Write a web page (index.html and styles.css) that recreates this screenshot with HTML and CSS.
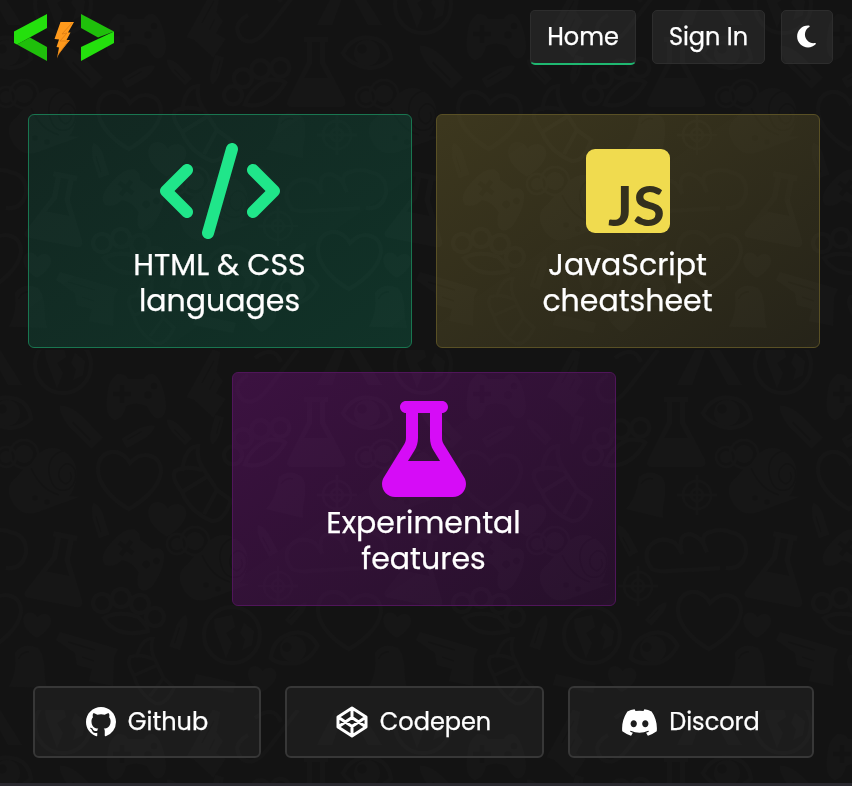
FILE: index.html
```html
<!DOCTYPE html>
<html lang="en">
<head>
<meta charset="utf-8">
<title>Code cheatsheets</title>
<link rel="stylesheet" href="styles.css">
</head>
<body>
<svg class="backdrop" aria-hidden="true">
  <defs>
    <g id="heart"><path d="M0 29C-13 22-32 6-31-12C-30-31-8-34 1-17C13-31 32-25 32-9C31 8 12 22 0 29Z"/></g>
    <g id="bullet"><path d="M-6 19V-5Q-4-17 0-20Q5-16 6-5V19Z"/><path class="cut" d="M-2 14V-5"/></g>
    <g id="flask"><path d="M-12-35H12V-30H9V-10L29 28Q31 35 24 35H-24Q-31 35-28 28L-9-10V-30H-12Z"/><path class="hole" d="M-4-30H4V-9L12 6H-12L-4-9Z"/></g>
    <g id="pad"><path d="M-18-22Q-10-22-8-17H8Q13-25 20-20Q29-10 30 12Q28 24 20 22Q14 18 11 10Q0 5-10 10Q-12 22-21 24Q-31 21-29 2Q-28-17-18-22Z"/><path class="cut wide" d="M-14-11V7M-23-2H-5"/><circle class="hole" cx="12" cy="-1" r="4"/><circle class="hole" cx="18" cy="-10" r="3.5"/></g>
    <g id="globe"><circle class="line" r="28"/><path d="M-18-16L0-20L3-8L-6-2L0 8L-6 23L-12 7L-17-6ZM12-12L22-4L20 10L10 15L13 4L8-2Z"/></g>
    <g id="eye"><path class="line" d="M-24 0Q-14-18 5-15Q22-12 24 6Q8 20-9 12Q-21 7-24 0Z"/><circle r="13"/><circle class="hole" cx="-5" cy="-4" r="5"/></g>
    <g id="snail"><path d="M-27 0Q-20-10-12-14Q2-38 22-26Q36-16 33 2Q30 15 26 18L36 19L0 32Q-23 43-33 19Q-37 6-27 0Z"/><circle class="line thin" cx="-19" cy="-24" r="14"/><circle cx="-19" cy="-24" r="9"/><circle class="line thin" cx="-37" cy="-21" r="10"/><circle cx="-37" cy="-21" r="6"/><path class="cut" d="M-12-10Q-2 12 16 17M23-28Q4-24 6-5Q10 17 26 11Q35 4 32-8Q25-20 17-9Q13 2 23 6Q31 2 27-6"/><circle class="hole" cx="-8" cy="20" r="3"/><circle class="hole" cx="4" cy="24" r="3"/></g>
    <g id="target"><circle class="line thin" r="14"/><circle class="line thin" r="6"/><path class="line thin" d="M-20 0H20M0-20V20"/></g>
    <g id="bell"><path d="M-11-20Q0-29 12-20Q17-14 14 4Q12 14 13 21L-24 12Q-13 0-11-20Z"/><path class="cut" d="M-9-13Q-4-20 3-18"/></g>
    <g id="knuckle"><circle class="line" cx="-25" cy="-9" r="9"/><circle class="line" cx="-6" cy="-14" r="9"/><circle class="line" cx="13" cy="-8" r="9"/><circle class="line" cx="28" cy="5" r="9"/><path class="line" d="M-23 6Q-7-2 11 5Q21 14 21 19Q-10 27-23 6Z"/></g>
    <g id="gun"><path d="M-34-10L-30-18L28-1L24 7L23 36L-1 31L2 19L-13 15L-15 3Z"/><path class="cut" d="M-22-8L5 0M-8 7L4 11"/></g>
    <g id="croissant"><path class="line" d="M-18-12Q-15-36-2-37Q-4-24 4-13L17 7L31 17Q24 39 12 38Q-10 29-18 9Q-29-5-25-12Q-14-18 2-13M-18 9L8-7M4 31L17 7"/></g>
    <pattern id="toys" width="360" height="360" patternUnits="userSpaceOnUse" y="-10">
      <use href="#globe" x="63" y="15"/>
      <use href="#pad" x="136" y="46"/>
      <use href="#gun" transform="translate(205 30) rotate(-45) scale(-.9 .9)"/>
      <use href="#eye" x="7" y="63"/><use href="#eye" x="367" y="63"/>
      <use href="#bullet" transform="translate(79 75) rotate(-45) scale(1.35)"/>
      <use href="#bullet" transform="translate(139 85) rotate(60) scale(.9)"/>
      <use href="#bullet" transform="translate(178 81) rotate(-44) scale(.8)"/>
      <use href="#bullet" transform="translate(216 80) rotate(195) scale(.75)"/>
      <use href="#snail" x="43" y="128"/><use href="#snail" x="403" y="128"/>
      <use class="line" href="#heart" x="129" y="130"/>
      <use href="#croissant" x="200" y="133"/>
      <use href="#heart" transform="translate(167 169) scale(.6)"/>
      <use href="#bullet" transform="translate(99 170) rotate(-17) scale(.9)"/>
      <use href="#flask" transform="translate(59 218) rotate(11)"/>
      <use href="#pad" transform="translate(136 208) rotate(37)"/>
      <use href="#snail" x="214" y="215"/>
      <use href="#knuckle" x="127" y="262"/>
      <use href="#bullet" transform="translate(180 282) rotate(18) scale(.9)"/>
      <use href="#globe" x="232" y="285"/>
      <use href="#heart" transform="translate(37 275) scale(.44)"/>
      <use href="#gun" x="90" y="300"/>
      <use href="#bell" transform="translate(30 320) rotate(-12)"/>
      <use href="#croissant" transform="translate(150 320) rotate(8) scale(.85)"/>
      <use href="#flask" x="316" y="82"/>
      <use href="#knuckle" transform="translate(257 94) rotate(-45)"/>
      <use href="#bell" x="290" y="147"/>
      <use href="#target" x="337" y="145"/>
      <path class="line" d="M292 219Q282 206 290 196Q300 185 315 193Q320 199 322 204Q317 185 329 184Q342 186 347 202Q338 185 350 182Q362 178 370 182Q387 185 386 203Q382 220 366 218L309 221Q298 222 292 219Z"/>
      <path class="line" transform="translate(-360 0)" d="M350 182Q362 178 370 182Q387 185 386 203Q382 220 366 218"/>
      <use href="#target" x="278" y="236"/>
      <use href="#bullet" transform="translate(266 190) rotate(-28) scale(.85)"/>
      <use href="#bullet" transform="translate(297 263) rotate(42) scale(.7)"/>
      <use class="line" href="#heart" x="349" y="270"/><use class="line" href="#heart" x="-11" y="270"/>
      <use href="#eye" transform="translate(293 299) rotate(-22)"/>
      <use href="#heart" transform="translate(262 329) scale(.45)"/>
      <path d="M196 324L236 333L233 343L193 335Z"/>
      <path class="line" d="M298 0L267 40Q252 58 241 48Q231 35 248 25M255 8Q274-6 281 12"/>
      <path d="M335 0L317 35H332L345 0ZM349 0L368 35H382L360 0ZM-11 0L8 35H22L0 0Z"/>
    </pattern>
  </defs>
  <rect width="100%" height="100%" fill="url(#toys)"/>
</svg>

<header class="topbar">
  <a class="logo" aria-label="Start page">
    <svg viewBox="0 0 100 47">
      <path fill="#1fbf0b" d="M3 30.5L16 23.500L33 33V47Z"/>
      <path fill="#24e00d" d="M33 0V14L3 30.500L0 29V17.500Z"/>
      <path fill="#1fbf0b" d="M67 0L100 17.500L84 23.500L67 14Z"/>
      <path fill="#24e00d" d="M100 17.500V29L67 47V33Z"/>
      <path fill="#ff9a1c" d="M46.500 8H60L54 18.500H56.500L52.500 26H56L45 39.500L43 44.500L45 33.500L42.500 33L45 25.500L40.500 25Z"/>
      <path stroke="#d97a12" stroke-width=".7" fill="none" d="M58 9L48 20L53 19L46 27L54 27L44 41"/>
    </svg>
  </a>
  <nav class="nav">
    <a class="nav-item active">Home</a>
    <a class="nav-item">Sign In</a>
    <button class="nav-item theme" aria-label="Theme">
      <svg viewBox="0 0 384 512"><path d="M223.500 32C100 32 0 132.300 0 256S100 480 223.500 480c60.600 0 115.500-24.200 155.800-63.400c5-4.900 6.300-12.500 3.100-18.700s-10.100-9.700-17-8.500c-9.800 1.700-19.800 2.600-30.100 2.600c-96.900 0-175.500-78.800-175.500-176c0-65.800 36-123.100 89.300-153.300c6.100-3.500 9.200-10.500 7.700-17.300s-7.300-11.900-14.300-12.500c-6.300-.5-12.600-.8-19-.8z"/></svg>
    </button>
  </nav>
</header>

<main class="cards">
  <a class="card html">
    <svg class="icon" viewBox="0 0 640 512"><path d="M392.800 1.200c-17-4.900-34.700 5-39.600 22l-128 448c-4.900 17 5 34.700 22 39.600s34.700-5 39.600-22l128-448c4.900-17-5-34.700-22-39.600zm80.600 120.100c-12.500 12.500-12.500 32.800 0 45.300L562.700 256l-89.400 89.400c-12.500 12.500-12.500 32.800 0 45.300s32.800 12.500 45.300 0l112-112c12.500-12.500 12.500-32.800 0-45.300l-112-112c-12.500-12.500-32.800-12.500-45.300 0zm-306.700 0c-12.500-12.500-32.800-12.500-45.300 0l-112 112c-12.500 12.500-12.500 32.800 0 45.300l112 112c12.500 12.500 32.800 12.500 45.300 0s12.500-32.800 0-45.300L77.300 256l89.400-89.400c12.500-12.500 12.500-32.800 0-45.300z"/></svg>
    <h2>HTML &amp; CSS<br>languages</h2>
  </a>
  <a class="card js">
    <svg class="icon" viewBox="0 0 84 96"><rect y="6" width="84" height="84" rx="9"/><text class="js-mark" x="22" y="82.500" textLength="57" lengthAdjust="spacingAndGlyphs">JS</text></svg>
    <h2>JavaScript<br>cheatsheet</h2>
  </a>
  <a class="card lab">
    <svg class="icon" viewBox="0 0 448 512"><path d="M288 0H160 128C110.300 0 96 14.300 96 32s14.300 32 32 32V196.800c0 11.800-3.300 23.500-9.500 33.500L10.300 406.200C3.600 417.200 0 429.700 0 442.600C0 480.900 31.100 512 69.400 512H378.600c38.300 0 69.400-31.100 69.400-69.400c0-12.800-3.600-25.400-10.300-36.400L329.500 230.400c-6.200-10.100-9.500-21.700-9.500-33.500V64c17.700 0 32-14.300 32-32s-14.300-32-32-32H288zM192 196.800V64h64V196.800c0 23.700 6.600 46.900 19 67.100L309.500 320h-171L173 263.900c12.400-20.200 19-43.400 19-67.100z"/></svg>
    <h2>Experimental<br>features</h2>
  </a>
</main>

<footer class="links">
  <a class="link github">
    <svg viewBox="0 0 16 16"><path d="M8 0C3.580 0 0 3.580 0 8c0 3.540 2.290 6.530 5.470 7.590.4.070.55-.17.55-.38 0-.19-.01-.82-.01-1.490-2.010.37-2.530-.49-2.690-.94-.09-.23-.48-.94-.82-1.130-.28-.15-.68-.52-.01-.53.63-.01 1.080.58 1.230.82.72 1.210 1.870.87 2.330.66.07-.52.28-.87.51-1.070-1.780-.2-3.640-.89-3.640-3.950 0-.87.31-1.590.82-2.150-.08-.2-.36-1.020.08-2.120 0 0 .67-.21 2.200.82.64-.18 1.320-.27 2-.27.68 0 1.360.09 2 .27 1.530-1.040 2.200-.82 2.200-.82.44 1.100.16 1.920.08 2.120.51.56.82 1.270.82 2.150 0 3.070-1.870 3.750-3.650 3.950.29.25.54.73.54 1.480 0 1.070-.01 1.930-.01 2.200 0 .21.15.46.55.38A8.010 8.010 0 0 0 16 8c0-4.420-3.580-8-8-8z"/></svg>
    <span>Github</span>
  </a>
  <a class="link codepen">
    <svg viewBox="0 0 32 32"><path d="M16 2L30 11V21L16 30L2 21V11ZM16 2V11.500M16 30V20.500M2 11L16 20.500L30 11M2 21L16 11.500L30 21"/></svg>
    <span>Codepen</span>
  </a>
  <a class="link discord">
    <svg viewBox="0 1.800 16 12.400"><path d="M13.545 2.907a13.200 13.200 0 0 0-3.257-1.011.05.05 0 0 0-.052.025c-.141.25-.297.577-.406.833a12.200 12.200 0 0 0-3.658 0 8 8 0 0 0-.412-.833.05.05 0 0 0-.052-.025c-1.125.194-2.220.534-3.257 1.011a.04.04 0 0 0-.021.018C.356 6.024-.213 9.047.066 12.032q.003.022.021.037a13.300 13.300 0 0 0 3.995 2.020.05.05 0 0 0 .056-.019q.463-.63.818-1.329a.05.05 0 0 0-.01-.059l-.018-.011a9 9 0 0 1-1.248-.595.05.05 0 0 1-.02-.066l.015-.019q.127-.095.248-.195a.05.05 0 0 1 .051-.007c2.619 1.196 5.454 1.196 8.041 0a.05.05 0 0 1 .053.007q.121.1.248.195a.05.05 0 0 1-.004.085 8 8 0 0 1-1.249.594.05.05 0 0 0-.03.03.05.05 0 0 0 .003.041c.24.465.515.909.817 1.329a.05.05 0 0 0 .056.019 13.200 13.200 0 0 0 4.001-2.020.05.05 0 0 0 .021-.037c.334-3.451-.559-6.449-2.366-9.106a.03.03 0 0 0-.02-.019m-8.198 7.307c-.789 0-1.438-.724-1.438-1.612s.637-1.613 1.438-1.613c.807 0 1.450.73 1.438 1.613 0 .888-.637 1.612-1.438 1.612m5.316 0c-.788 0-1.438-.724-1.438-1.612s.637-1.613 1.438-1.613c.807 0 1.451.73 1.438 1.613 0 .888-.631 1.612-1.438 1.612"/></svg>
    <span>Discord</span>
  </a>
</footer>
<div class="end-line"></div>
</body>
</html>
```
FILE: styles.css
```css
* { box-sizing: border-box; }
html { background: #131313; }
body {
  margin: 0;
  height: 786px;
  overflow: hidden;
  display: flex;
  flex-direction: column;
  color: #fff;
  font-family: Poppins, Inter, "Open Sans", sans-serif;
  -webkit-text-stroke: .25px #fff;
}
svg { display: block; }

.backdrop {
  position: fixed;
  inset: 0;
  z-index: -1;
  width: 100%;
  height: 100%;
  fill: #161616;
}
.backdrop .line { fill: none; stroke: #161616; stroke-width: 4; }
.backdrop .line.thin { stroke-width: 2.5; }
.backdrop .cut { fill: none; stroke: #131313; stroke-width: 2; }
.backdrop .cut.wide { stroke-width: 5; }
.backdrop .hole { fill: #131313; }

.topbar {
  display: flex;
  justify-content: space-between;
  align-items: flex-start;
  height: 114px;
  padding: 10px 19px 0 14px;
}
.logo { width: 100px; padding-top: 4px; }
.nav { display: flex; gap: 16px; }
.nav-item {
  display: flex;
  align-items: center;
  justify-content: center;
  width: 113px;
  height: 54px;
  padding-bottom: 2px;
  border: 1px solid #2d2d2d;
  border-radius: 5px;
  background: rgba(255, 255, 255, .065);
  font-size: 24px;
  white-space: nowrap;
}
.nav-item.active { width: 106px; height: 55px; border-bottom: 2px solid #1fb871; }
.nav-item.theme { width: 52px; padding: 0 1px 2px 0; }
.theme svg { width: 19px; height: 25px; fill: #fff; }

.cards {
  display: flex;
  flex-wrap: wrap;
  justify-content: center;
  align-content: flex-start;
  gap: 24px;
  height: 572px;
  padding-right: 4px;
}
.card {
  display: flex;
  flex-direction: column;
  align-items: center;
  width: 384px;
  height: 234px;
  padding: 28px 1px 0 0;
  border: 1px solid;
  border-radius: 6px;
}
.card .icon { height: 96px; }
.card h2 {
  margin: 8px 0 0;
  font-size: 30px;
  font-weight: 400;
  line-height: 36px;
  text-align: center;
}
.html { border-color: #197650; background: linear-gradient(145deg, rgba(19, 219, 159, .1), rgba(9, 190, 134, .19)); }
.html .icon { width: 120px; fill: #20e68a; }
.js { border-color: #595025; background: linear-gradient(145deg, rgba(228, 202, 75, .2), rgba(210, 190, 85, .1)); }
.js .icon { width: 84px; fill: #f0db4f; }
.js .js-mark { fill: #34301d; font: 700 55px Lato, sans-serif; -webkit-text-stroke: 0; }
.lab { border-color: #50155a; background: linear-gradient(145deg, rgba(224, 14, 249, .2), rgba(209, 0, 249, .1)); }
.lab .icon { width: 84px; fill: #d60cf7; }

.links { display: flex; gap: 24px; padding-left: 33px; }
.link {
  display: flex;
  align-items: center;
  justify-content: center;
  gap: 12px;
  height: 72px;
  border: 2px solid #373737;
  border-radius: 6px;
  background: rgba(255, 255, 255, .04);
  font-size: 24px;
}
.link span { margin-top: -2px; }
.link svg { fill: #fff; }
.github { width: 228px; }
.github svg { width: 30px; height: 30px; }
.codepen { width: 259px; }
.codepen { padding-right: 2px; }
.codepen svg { width: 32px; height: 32px; fill: none; stroke: #fff; stroke-width: 3; stroke-linejoin: round; }
.discord { width: 246px; }
.discord svg { width: 35px; height: 27px; }

.end-line { height: 3px; margin-top: 25px; background: #29282e; }
```
